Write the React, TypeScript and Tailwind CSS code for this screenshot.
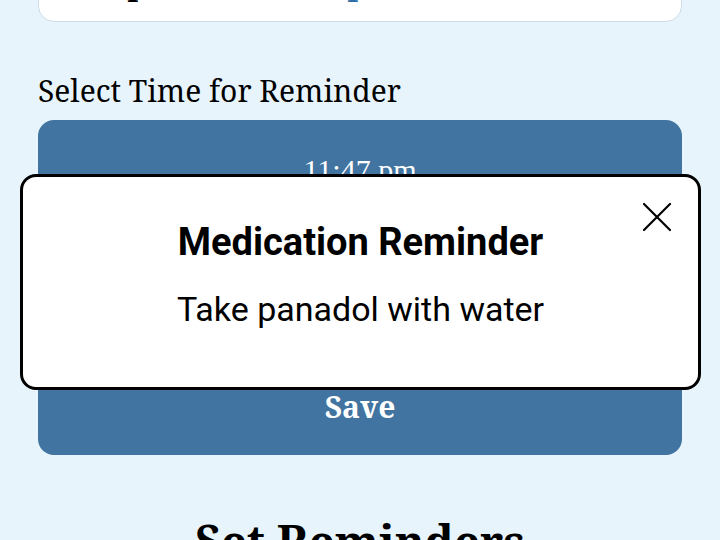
import React from "react"

const serif = "font-['Noto_Serif','DejaVu_Serif_Condensed','Liberation_Serif',serif]"

const CloseIcon = () => (
    <svg width="30" height="30" viewBox="0 0 30 30" fill="none" stroke="#000" strokeWidth="2.2" strokeLinecap="round">
        <path d="M2 2 L28 28 M28 2 L2 28" />
    </svg>
)

const App = () => {
    return (
        <div className="relative w-[720px] h-[540px] overflow-hidden bg-[#e7f4fb]">
            <div className="px-[38px] flex flex-col">
                {/* medication card, scrolled mostly out of view */}
                <div className="relative mt-[-58px] h-[80px] overflow-hidden bg-white rounded-[16px] border border-[#cfdbe7]">
                    <span className={`${serif} absolute left-[50px] top-[26px] text-[30px] font-bold leading-none text-black`}>Rep</span>
                    <span className={`${serif} absolute left-[270px] top-[26px] text-[30px] font-bold leading-none text-[#2f6fa8]`}>Rep</span>
                </div>

                <div className={`${serif} mt-[50px] text-[30px] leading-[38px] text-black`}>Select Time for Reminder</div>

                <div className="mt-[10px] h-[130px] bg-[#4174a0] rounded-[16px] flex justify-center pt-[30px]">
                    <span className="font-['Liberation_Serif',serif] text-white text-[30px] leading-[40px]">11:47 pm</span>
                </div>

                <div className="mt-[-20px] h-[225px] bg-[#4174a0] rounded-[16px] flex flex-col justify-end items-center pb-[28px]">
                    <span className={`${serif} text-white font-bold text-[30px] leading-[40px]`}>Save</span>
                </div>

                <div className={`${serif} mt-[58px] text-center text-[45px] font-bold leading-[56px] text-black whitespace-nowrap`}>Set Reminders</div>
            </div>

            <div className="absolute left-[20px] top-[174px] w-[681px] h-[216px] bg-white border-[3px] border-black rounded-[16px] flex flex-col items-center font-['Roboto',sans-serif]">
                <button className="absolute right-[26px] top-[25px]">
                    <CloseIcon />
                </button>
                <div className="mt-[43px] text-[38px] font-bold leading-[44px] text-black">Medication Reminder</div>
                <div className="mt-[23px] text-[34px] leading-[44px] text-black">Take panadol with water</div>
            </div>
        </div>
    )
}

export default App
